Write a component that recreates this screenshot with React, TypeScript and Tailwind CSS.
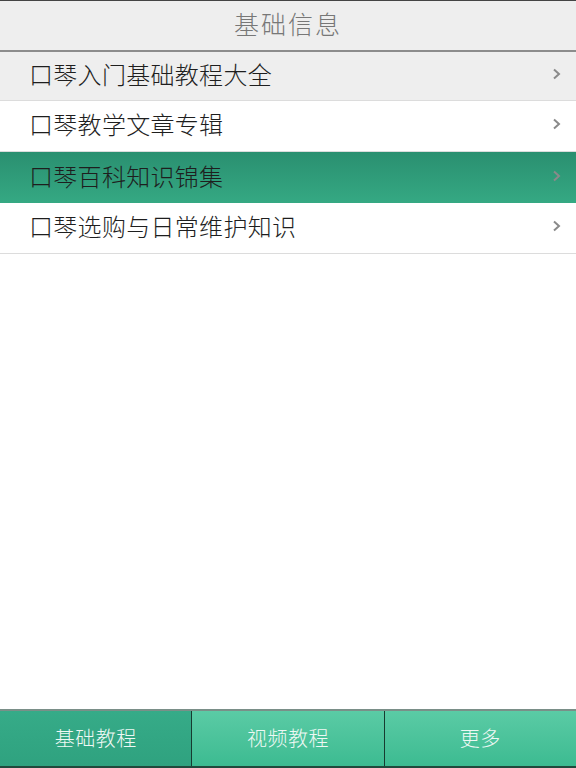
import React from 'react'

const items = [
  { title: '口琴入门基础教程大全', active: false, tinted: true },
  { title: '口琴教学文章专辑', active: false, tinted: false },
  { title: '口琴百科知识锦集', active: true, tinted: false },
  { title: '口琴选购与日常维护知识', active: false, tinted: false },
]

const tabs = ['基础教程', '视频教程', '更多']

function Chevron() {
  return (
    <svg width="10" height="14" viewBox="0 0 10 14" className="shrink-0">
      <path d="M2 2.5 L7 7 L2 11.5" fill="none" stroke="#8a8a8a" strokeWidth="2" />
    </svg>
  )
}

export default function App() {
  const font = { fontFamily: '"Noto Sans CJK SC", "Liberation Sans", sans-serif' }

  return (
    <div className="flex h-[768px] w-[576px] flex-col bg-white" style={font}>
      {/* Header */}
      <div className="flex h-[52px] shrink-0 items-center justify-center border-t border-b-2 border-t-[#444] border-b-[#8c8c8c] bg-[#eeeeee] pb-[4px]">
        <span className="text-[25px] font-light leading-none tracking-[2px] text-[#777]">基础信息</span>
      </div>

      {/* List */}
      <div className="flex flex-col">
        {items.map((item) => (
          <div
            key={item.title}
            className={
              item.active
                ? 'flex h-[51px] items-center justify-between bg-gradient-to-b from-[#2a8f70] to-[#35a983] pb-[4px] pl-[29px] pr-[14px]'
                : item.tinted
                  ? 'flex h-[49px] items-center justify-between border-b border-[#dcdcdc] bg-[#eeeeee] pb-[4px] pl-[29px] pr-[14px]'
                  : 'flex h-[51px] items-center justify-between border-b border-[#dcdcdc] bg-white pb-[4px] pl-[29px] pr-[14px]'
            }
          >
            <span className="text-[24px] font-light leading-none tracking-[0.3px] text-[#1e1e1e]">{item.title}</span>
            <Chevron />
          </div>
        ))}
      </div>

      <div className="flex-1" />

      {/* Tab bar */}
      <div className="flex h-[59px] shrink-0 border-t-2 border-b-2 border-t-[#7a8f88] border-b-[#1f4a3c]">
        {tabs.map((tab, i) => (
          <div
            key={tab}
            className={
              i === 0
                ? 'flex flex-1 items-center justify-center bg-gradient-to-b from-[#36ab88] to-[#2fa27f] pb-[2px] text-[20px] font-light tracking-[0.5px] text-[#eef8f4]'
                : 'flex flex-1 items-center justify-center border-l border-[#173b30] bg-gradient-to-b from-[#5acba5] to-[#3cbb91] pb-[2px] text-[20px] font-light tracking-[0.5px] text-[#eef8f4]'
            }
          >
            {tab}
          </div>
        ))}
      </div>
    </div>
  )
}
